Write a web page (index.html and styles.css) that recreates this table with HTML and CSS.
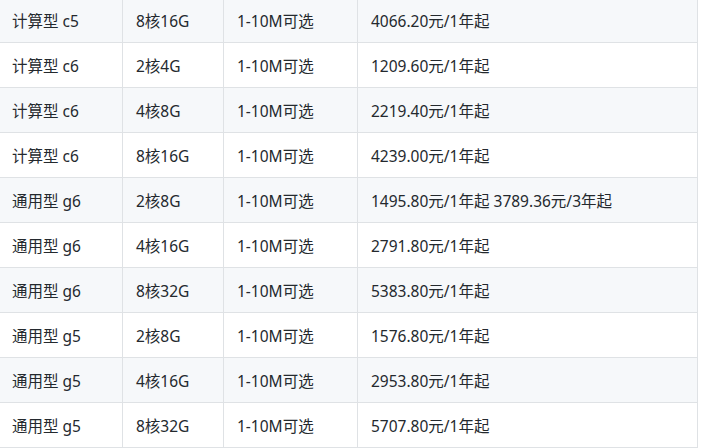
FILE: index.html
```html
<!DOCTYPE html>
<html lang="zh">
<head>
<meta charset="utf-8">
<link rel="stylesheet" href="styles.css">
</head>
<body>
<table class="spec">
  <colgroup>
    <col class="c1"><col class="c2"><col class="c3"><col class="c4">
  </colgroup>
  <tbody>
    <tr><td>计算型 c5</td><td>8核16G</td><td>1-10M可选</td><td>4066.20元/1年起</td></tr>
    <tr><td>计算型 c6</td><td>2核4G</td><td>1-10M可选</td><td>1209.60元/1年起</td></tr>
    <tr><td>计算型 c6</td><td>4核8G</td><td>1-10M可选</td><td>2219.40元/1年起</td></tr>
    <tr><td>计算型 c6</td><td>8核16G</td><td>1-10M可选</td><td>4239.00元/1年起</td></tr>
    <tr><td>通用型 g6</td><td>2核8G</td><td>1-10M可选</td><td>1495.80元/1年起 3789.36元/3年起</td></tr>
    <tr><td>通用型 g6</td><td>4核16G</td><td>1-10M可选</td><td>2791.80元/1年起</td></tr>
    <tr><td>通用型 g6</td><td>8核32G</td><td>1-10M可选</td><td>5383.80元/1年起</td></tr>
    <tr><td>通用型 g5</td><td>2核8G</td><td>1-10M可选</td><td>1576.80元/1年起</td></tr>
    <tr><td>通用型 g5</td><td>4核16G</td><td>1-10M可选</td><td>2953.80元/1年起</td></tr>
    <tr><td>通用型 g5</td><td>8核32G</td><td>1-10M可选</td><td>5707.80元/1年起</td></tr>
  </tbody>
</table>
</body>
</html>
```
FILE: styles.css
```css
html, body {
  margin: 0;
  padding: 0;
  background: #ffffff;
}
body {
  font-family: "Noto Sans", "Noto Sans CJK SC", sans-serif;
  font-size: 15.5px;
  color: #24292e;
  overflow: hidden;
}
.spec {
  border-collapse: collapse;
  table-layout: fixed;
  width: 699px;
  margin-left: -2px;
  margin-top: -3px;
}
.c1 { width: 124px; }
.c2 { width: 101px; }
.c3 { width: 134px; }
.c4 { width: 340px; }
.spec td {
  border: 1px solid #dfe2e5;
  padding: 0 13px;
  height: 45px;
  box-sizing: border-box;
  white-space: nowrap;
  vertical-align: middle;
}
.spec tr:nth-child(odd) td {
  background: #f6f8fa;
}
```
